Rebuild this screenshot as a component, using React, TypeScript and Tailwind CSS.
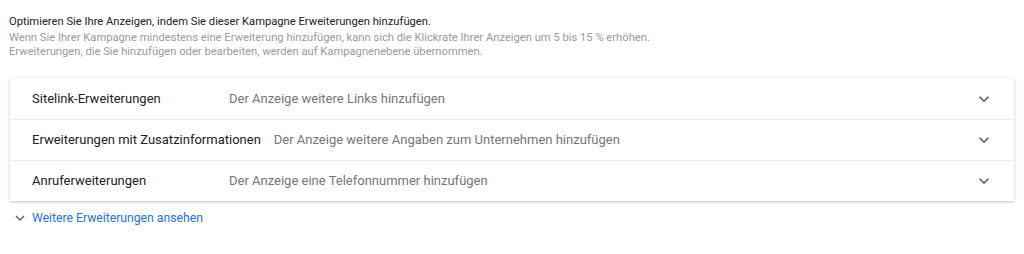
const rows = [
  { title: 'Sitelink-Erweiterungen', text: 'Der Anzeige weitere Links hinzufügen' },
  { title: 'Erweiterungen mit Zusatzinformationen', text: 'Der Anzeige weitere Angaben zum Unternehmen hinzufügen' },
  { title: 'Anruferweiterungen', text: 'Der Anzeige eine Telefonnummer hinzufügen' },
];

function ExpandMore({ className }: { className?: string }) {
  return (
    <svg viewBox="0 0 24 24" className={className} fill="currentColor">
      <path d="M16.59 8.59 12 13.17 7.41 8.59 6 10l6 6 6-6z" />
    </svg>
  );
}

export default function App() {
  return (
    <div className="h-[254px] w-[1024px] bg-white pl-[9px] pr-[10px] pt-[15px] font-['Roboto',sans-serif]">
      <div className="text-[11.2px] leading-[14px]">
        <p className="mb-[2px] text-[#202124]">Optimieren Sie Ihre Anzeigen, indem Sie dieser Kampagne Erweiterungen hinzufügen.</p>
        <p className="text-[#9a9a9a]">
          Wenn Sie Ihrer Kampagne mindestens eine Erweiterung hinzufügen, kann sich die Klickrate Ihrer Anzeigen um 5 bis 15 % erhöhen.
        </p>
        <p className="text-[#9a9a9a]">Erweiterungen, die Sie hinzufügen oder bearbeiten, werden auf Kampagnenebene übernommen.</p>
      </div>

      <div className="ml-px mt-[19px] bg-white shadow-[0_1px_3px_rgba(0,0,0,0.25)]">
        {rows.map((row, i) => (
          <div
            key={row.title}
            className={`flex h-[41px] items-center pl-[22px] pr-[20px] text-[13px] ${i > 0 ? 'border-t border-[#ececec]' : ''}`}
          >
            <span className="min-w-[184px] text-[#202124]">{row.title}</span>
            <span className="ml-[13px] flex-1 text-[#757575]">{row.text}</span>
            <ExpandMore className="h-5 w-5 text-[#5f6368]" />
          </div>
        ))}
      </div>

      <div className="mt-[8px] flex items-center gap-[3px] pl-[2px] text-[12.2px] text-[#1a73e8]">
        <ExpandMore className="h-[18px] w-[18px] text-[#5f6368]" />
        <span>Weitere Erweiterungen ansehen</span>
      </div>
    </div>
  );
}
